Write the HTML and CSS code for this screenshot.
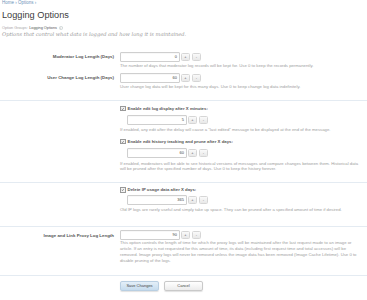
FILE: index.html
```html
<!DOCTYPE html>
<html>
<head>
<meta charset="utf-8">
<link rel="stylesheet" href="styles.css">
</head>
<body>
<div class="header">
  <div class="crumbs"><a>Home</a> › <a>Options</a> ›</div>
  <h1 class="title">Logging Options</h1>
  <div class="groups"><span class="muted">Option Groups:</span> <span class="cur">Logging Options</span>
    <svg class="ddicon" viewBox="0 0 10 10"><circle cx="5" cy="5" r="4.2" fill="#fff" stroke="#9aa" stroke-width="0.9"/><path d="M3 4.2 L5 6.2 L7 4.2" fill="none" stroke="#777" stroke-width="1"/></svg>
  </div>
  <div class="desc">Options that control what data is logged and how long it is maintained.</div>
</div>

<form class="form">
  <div class="row r1">
    <div class="label">Moderator Log Length (Days)</div>
    <div class="ctrl">
      <div class="spin"><div class="box">0</div><span class="btn">+</span><span class="btn">-</span></div>
      <div class="hint h1">The number of days that moderator log records will be kept for. Use 0 to keep the records permanently.</div>
    </div>
  </div>
  <div class="row r2">
    <div class="label">User Change Log Length (Days)</div>
    <div class="ctrl">
      <div class="spin"><div class="box">60</div><span class="btn">+</span><span class="btn">-</span></div>
      <div class="hint h1">User change log data will be kept for this many days. Use 0 to keep change log data indefinitely.</div>
    </div>
  </div>

  <div class="sep s1"></div>

  <div class="row r3">
    <div class="label"></div>
    <div class="ctrl">
      <div class="check"><span class="cb"><svg viewBox="0 0 10 10"><path d="M2 5 L4.2 7.5 L8 2.5" fill="none" stroke="#555" stroke-width="1.6"/></svg></span>Enable edit log display after X minutes:</div>
      <div class="spin ind c3"><div class="box">5</div><span class="btn">+</span><span class="btn">-</span></div>
      <div class="hint h3">If enabled, any edit after the delay will cause a "last edited" message to be displayed at the end of the message.</div>
      <div class="check c4"><span class="cb"><svg viewBox="0 0 10 10"><path d="M2 5 L4.2 7.5 L8 2.5" fill="none" stroke="#555" stroke-width="1.6"/></svg></span>Enable edit history tracking and prune after X days:</div>
      <div class="spin ind c3"><div class="box">60</div><span class="btn">+</span><span class="btn">-</span></div>
      <div class="hint h4">If enabled, moderators will be able to see historical versions of messages and compare changes between them. Historical data will be pruned after the specified number of days. Use 0 to keep the history forever.</div>
    </div>
  </div>

  <div class="sep s2"></div>

  <div class="row r5">
    <div class="label"></div>
    <div class="ctrl">
      <div class="check"><span class="cb"><svg viewBox="0 0 10 10"><path d="M2 5 L4.2 7.5 L8 2.5" fill="none" stroke="#555" stroke-width="1.6"/></svg></span>Delete IP usage data after X days:</div>
      <div class="spin ind c5"><div class="box">365</div><span class="btn">+</span><span class="btn">-</span></div>
      <div class="hint h5">Old IP logs are rarely useful and simply take up space. They can be pruned after a specified amount of time if desired.</div>
    </div>
  </div>

  <div class="sep s3"></div>

  <div class="row r6">
    <div class="label">Image and Link Proxy Log Length</div>
    <div class="ctrl">
      <div class="spin"><div class="box">90</div><span class="btn">+</span><span class="btn">-</span></div>
      <div class="hint h6">This option controls the length of time for which the proxy logs will be maintained after the last request made to an image or article. If an entry is not requested for this amount of time, its data (including first request time and total accesses) will be removed. Image proxy logs will never be removed unless the image data has been removed (Image Cache Lifetime). Use 0 to disable pruning of the logs.</div>
    </div>
  </div>

  <div class="sep s4"></div>

  <div class="row r7">
    <div class="label"></div>
    <div class="ctrl buttons">
      <span class="button primary">Save Changes</span>
      <span class="button">Cancel</span>
    </div>
  </div>
</form>
</body>
</html>
```

FILE: styles.css
```css
html, body {
  margin: 0;
  padding: 0;
  background: #ffffff;
}
body {
  font-family: "Liberation Sans", Arial, sans-serif;
  color: #333;
  width: 367px;
  height: 300px;
  overflow: hidden;
}
.header {
  padding-left: 2px;
}
.crumbs {
  font-size: 4.5px;
  line-height: 6px;
  height: 6px;
  color: #6d92b8;
}
.crumbs a {
  color: #6d92b8;
}
.title {
  font-family: "Liberation Sans", sans-serif;
  font-weight: normal;
  font-size: 9.2px;
  line-height: 12px;
  margin: 3px 0 0 0;
  color: #3d3d3d;
}
.groups {
  font-size: 3.8px;
  line-height: 6px;
  margin-top: 4px;
  display: flex;
  align-items: center;
  gap: 1px;
}
.groups .muted { color: #a6a6a6; margin-right: 0.5px; }
.groups .cur { color: #555; }
.ddicon { width: 4px; height: 4px; margin-left: 1px; }
.desc {
  font-family: "DejaVu Serif", serif;
  font-style: italic;
  font-size: 5.1px;
  line-height: 7px;
  color: #9a9a9a;
}
.form {
  margin-top: 14px;
}
.row {
  display: grid;
  grid-template-columns: 114px 240px;
  column-gap: 6px;
}
.label {
  text-align: right;
  font-size: 4.4px;
  line-height: 9px;
  color: #555;
  font-weight: bold;
}
.spin {
  display: flex;
  align-items: center;
  height: 9px;
}
.box {
  width: 56px;
  height: 8px;
  border: 0.5px solid #cfcfcf;
  border-radius: 1px;
  background: #fff;
  font-size: 4px;
  line-height: 8px;
  text-align: right;
  padding-right: 2px;
  color: #444;
  box-shadow: inset 0 0.5px 1px rgba(0,0,0,0.06);
}
.btn {
  width: 7px;
  height: 6px;
  margin-left: 2px;
  border: 0.5px solid #d6d6d6;
  border-radius: 1.5px;
  background: linear-gradient(#fafafa, #e8e8e8);
  font-size: 4px;
  line-height: 6px;
  text-align: center;
  color: #555;
}
.spin .btn:first-of-type { margin-left: 1px; }
.hint {
  font-size: 4.25px;
  line-height: 6px;
  color: #a0a0a0;
}
.r1 .hint { margin-top: 2px; }
.r2 { margin-top: 4px; }
.r2 .hint { margin-top: 2px; }
.sep {
  height: 0.5px;
  background: #e4ebf2;
  width: 367px;
}
.s1 { margin-top: 10px; }
.check {
  font-size: 4.3px;
  line-height: 6px;
  color: #555;
  font-weight: bold;
  display: flex;
  align-items: center;
}
.cb {
  width: 3.6px;
  height: 3.6px;
  border: 0.4px solid #999;
  background: #f3f3f3;
  margin-right: 2px;
  display: inline-flex;
}
.cb svg { width: 100%; height: 100%; }
.r3 { margin-top: 5px; }
.ind { margin-left: 7px; }
.c3 { margin-top: 4px; }
.h3 { margin-top: 2px; }
.c4 { margin-top: 6px; }
.h4 { margin-top: 3px; line-height: 5.5px; }
.s2 { margin-top: 10px; }
.r5 { margin-top: 5px; }
.c5 { margin-top: 2px; }
.h5 { margin-top: 3px; }
.s3 { margin-top: 13px; }
.r6 { margin-top: 4px; }
.h6 { margin-top: 0; line-height: 6px; }
.s4 { margin-top: 11px; }
.r7 { margin-top: 6px; }
.buttons {
  display: flex;
  gap: 5px;
}
.button {
  width: 37px;
  height: 8px;
  border: 0.5px solid #c9c9c9;
  border-radius: 2px;
  font-size: 4px;
  line-height: 8px;
  text-align: center;
  color: #444;
  background: linear-gradient(#ffffff, #ececec);
  box-shadow: 0 0.5px 1px rgba(0,0,0,0.12);
}
.button.primary {
  background: linear-gradient(#e4eff8, #c6dcee);
  border-color: #b9cfe2;
}
```
